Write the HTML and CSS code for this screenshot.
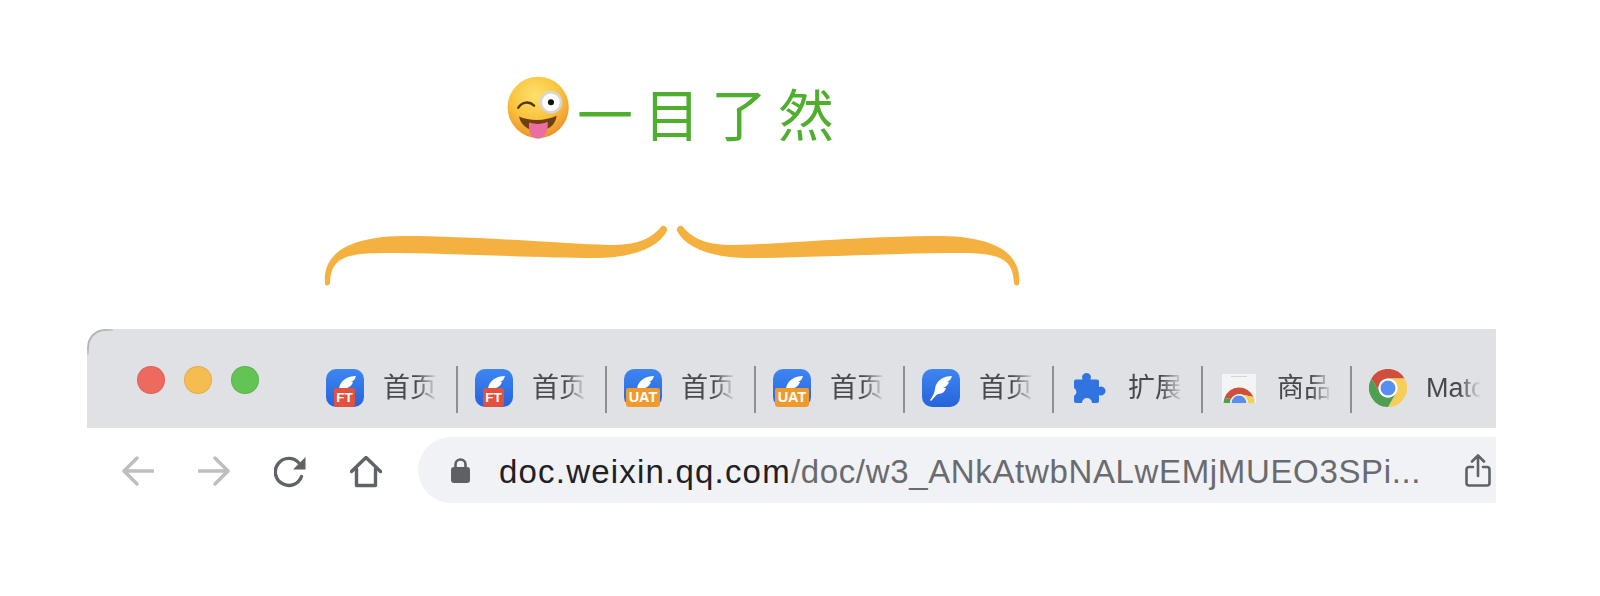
FILE: index.html
```html
<!DOCTYPE html>
<html lang="zh-CN">
<head>
    <meta charset="UTF-8">
    <meta name="viewport" content="width=device-width, initial-scale=1.0">
    <title>一目了然</title>
    <link rel="stylesheet" href="styles.css">
</head>
<body>

<svg class="defs" width="0" height="0">
    <defs>
        <linearGradient id="appBlue" x1="0" y1="0" x2="0" y2="1">
            <stop offset="0" stop-color="#3d86f2"/>
            <stop offset="1" stop-color="#2763da"/>
        </linearGradient>
        <radialGradient id="faceGold" cx="0.45" cy="0.3" r="0.75">
            <stop offset="0" stop-color="#fce26c"/>
            <stop offset="0.55" stop-color="#f9c23c"/>
            <stop offset="1" stop-color="#ea8a2a"/>
        </radialGradient>
        <symbol id="appIcon" viewBox="0 0 38 38">
            <rect width="38" height="38" rx="10" fill="url(#appBlue)"/>
            <path fill="#fff" d="M30 7C22 7 14 11 13 20C12.500 23 12 26 8 31L9 32C12 29 14 26 16 25C21 25 23 22 24 19L21 19C24 18 26 16 27 13L25 13C28 12 29 10 30 7Z"/>
        </symbol>
    </defs>
</svg>

<div class="title-row">
    <svg class="emoji" viewBox="85 52 186 190">
        <circle cx="177" cy="145" r="91" fill="url(#faceGold)"/>
        <path d="M118 146C130 128 150 126 165 140" fill="none" stroke="#5a3410" stroke-width="7" stroke-linecap="round"/>
        <circle cx="215" cy="130" r="34" fill="#d9d6d2"/>
        <circle cx="215" cy="130" r="26" fill="#fff"/>
        <circle cx="215" cy="130" r="9" fill="#111"/>
        <path d="M120 172C150 186 200 186 232 170C228 200 205 214 177 214C148 214 126 200 120 172Z" fill="#6e3f10"/>
        <path d="M150 190C168 196 190 196 205 188C207 205 204 238 177 238C152 238 148 208 150 190Z" fill="#ea6fa0"/>
    </svg>
    <h1 class="title">一目了然</h1>
</div>

<svg class="brace" viewBox="320 220 710 70">
    <g fill="#f4b13f">
        <path id="braceHalf" d="M325 284C323 262 335 237 403 236C480 236 560 244 610 245C635 245 650 240 661 227C663 224 668 227 667 231C658 248 632 258 595 258C540 258 450 253 385 253C345 253 331 258 330 283C330 286 325 286 325 284Z"/>
        <use href="#braceHalf" transform="translate(1344 0) scale(-1 1)"/>
    </g>
</svg>

<div class="window">
    <div class="bookmarks">
        <div class="lights">
            <span class="light red"></span>
            <span class="light yellow"></span>
            <span class="light green"></span>
        </div>
        <div class="tabs">
            <div class="tab">
                <span class="app-icon"><svg viewBox="0 0 38 38"><use href="#appIcon"/></svg><span class="badge ft">FT</span></span>
                <span class="label">首页</span>
            </div>
            <div class="tab">
                <span class="app-icon"><svg viewBox="0 0 38 38"><use href="#appIcon"/></svg><span class="badge ft">FT</span></span>
                <span class="label">首页</span>
            </div>
            <div class="tab">
                <span class="app-icon"><svg viewBox="0 0 38 38"><use href="#appIcon"/></svg><span class="badge uat">UAT</span></span>
                <span class="label">首页</span>
            </div>
            <div class="tab">
                <span class="app-icon"><svg viewBox="0 0 38 38"><use href="#appIcon"/></svg><span class="badge uat">UAT</span></span>
                <span class="label">首页</span>
            </div>
            <div class="tab">
                <span class="app-icon"><svg viewBox="0 0 38 38"><use href="#appIcon"/></svg></span>
                <span class="label">首页</span>
            </div>
            <div class="tab">
                <span class="app-icon">
                    <svg viewBox="0 0 38 38">
                        <path fill="#3173e0" d="M5 10.500H11.500A4.500 4.500 0 1 1 19.500 10.500H26Q28 10.500 28 12.500V18A4.500 4.500 0 1 1 28 26V32Q28 34 26 34H21A5 5 0 0 0 11 34H5Q3 34 3 32V27A4.500 4.500 0 0 0 3 19V12.500Q3 10.500 5 10.500Z"/>
                    </svg>
                </span>
                <span class="label">扩展</span>
            </div>
            <div class="tab">
                <span class="app-icon">
                    <svg viewBox="0 0 38 38">
                        <rect x="2" y="5" width="34" height="29" fill="#f4f4f5"/>
                        <rect x="11" y="7" width="16" height="1" fill="#d5d5d8"/>
                        <path fill="#cf4f3c" d="M4.500 29A15.500 15.500 0 0 1 33.500 28L19 25L11 30Z"/>
                        <path fill="#4f9f52" d="M3.500 34A15.500 15.500 0 0 1 4.500 29L11 30L12 34Z"/>
                        <path fill="#f6cf58" d="M33.500 28A15.500 15.500 0 0 1 34.500 34H26L19 25Z"/>
                        <path fill="#f4f4f5" d="M10 34A9 9 0 0 1 28 34Z"/>
                        <path fill="#5a8df0" d="M11.500 34A7.500 7.500 0 0 1 26.500 34Z"/>
                    </svg>
                </span>
                <span class="label">商品</span>
            </div>
            <div class="tab">
                <span class="app-icon">
                    <svg viewBox="0 0 38 38">
                        <path fill="#cf4f3c" d="M2.500 9.500A19 19 0 0 1 35.500 9.500L19 9.500A9.500 9.500 0 0 0 10.800 23.750Z"/>
                        <path fill="#f6cf58" d="M35.500 9.500A19 19 0 0 1 19 38L27.200 23.750A9.500 9.500 0 0 0 19 9.500Z"/>
                        <path fill="#4f9f52" d="M19 38A19 19 0 0 1 2.500 9.500L10.800 23.750A9.500 9.500 0 0 0 27.200 23.750Z"/>
                        <circle cx="19" cy="19" r="9.500" fill="#fff"/>
                        <circle cx="19" cy="19" r="7.500" fill="#5a8df0"/>
                    </svg>
                </span>
                <span class="label">Matc</span>
            </div>
        </div>
    </div>

    <div class="toolbar">
        <svg class="nav-icon muted" viewBox="0 0 32 32">
            <path d="M31 15H2M15 2L2 15L15 28"/>
        </svg>
        <svg class="nav-icon muted" viewBox="0 0 32 32">
            <path d="M1 15H30M17 2L30 15L17 28"/>
        </svg>
        <svg class="nav-icon" viewBox="0 0 32 32">
            <path d="M27.500 20.500A13.500 13.500 0 1 1 25 7"/>
            <path class="solid" d="M31.500 1V13.500H19Z"/>
        </svg>
        <svg class="nav-icon" viewBox="0 0 32 32">
            <path d="M1.500 15.500L16 1.500L30.500 15.500M6.500 13V29.500H25.500V13"/>
        </svg>
        <div class="omnibox">
            <svg class="lock" viewBox="0 0 19 25">
                <path class="lock-body" d="M3 9H16C18 9 19 10 19 12V22C19 24 18 25 16 25H3C1 25 0 24 0 22V12C0 10 1 9 3 9Z"/>
                <path class="lock-loop" d="M4.500 10V6.500A5 5 0 0 1 14.500 6.500V10"/>
            </svg>
            <div class="url"><span class="host">doc.weixin.qq.com</span>/doc/w3_ANkAtwbNALwEMjMUEO3SPi...</div>
            <svg class="share" viewBox="0 0 26 33">
                <path d="M8 13H4C2.500 13 1.500 14 1.500 15.500V29C1.500 30.500 2.500 31.500 4 31.500H22C23.500 31.500 24.500 30.500 24.500 29V15.500C24.500 14 23.500 13 22 13H18M13 22V2M7 7.500L13 1.500L19 7.500"/>
            </svg>
        </div>
    </div>
</div>

</body>
</html>
```

FILE: styles.css
```css
html, body {
    height: 596px;
    overflow: hidden;
}

body {
    margin: 0;
    background-color: #fff;
    font-family: 'Liberation Sans', 'Noto Sans CJK SC', sans-serif;
}

.defs {
    display: block;
    height: 0;
}

.title-row {
    display: flex;
    align-items: flex-start;
    height: 146px;
    padding: 76px 0 0 507px;
    box-sizing: border-box;
}

.emoji {
    width: 63px;
    height: 64px;
    flex-shrink: 0;
}

.title {
    margin: 0 0 0 7px;
    font-family: 'Noto Sans CJK SC', sans-serif;
    font-size: 56px;
    font-weight: 400;
    line-height: 72px;
    letter-spacing: 11px;
    color: #4fae2e;
}

.brace {
    display: block;
    width: 710px;
    height: 70px;
    margin: 74px 0 0 320px;
}

.window {
    width: 1409px;
    margin: 39px 0 0 87px;
    overflow: hidden;
}

/* top grey strip with the bookmarks */
.bookmarks {
    position: relative;
    display: flex;
    align-items: flex-start;
    height: 99px;
    padding: 37px 0 0 50px;
    box-sizing: border-box;
    background-color: #e0e1e5;
    border-radius: 18px 0 0 0;
    overflow: hidden;
}

/* thin dark arc on the rounded corner */
.bookmarks::before {
    content: "";
    position: absolute;
    top: 0;
    left: 0;
    width: 26px;
    height: 26px;
    box-sizing: border-box;
    border-top: 2px solid #b4b5b8;
    border-left: 2px solid #b4b5b8;
    border-radius: 18px 0 0 0;
    -webkit-mask-image: radial-gradient(circle at 0 0, #000 50%, transparent 85%);
    mask-image: radial-gradient(circle at 0 0, #000 50%, transparent 85%);
}

.lights {
    display: flex;
    gap: 19px;
    margin-right: 50px;
}

.light {
    width: 28px;
    height: 28px;
    border-radius: 50%;
    box-sizing: border-box;
    border: 1px solid rgba(0, 0, 0, 0.08);
}

.red { background-color: #ee6a5f; }
.yellow { background-color: #f5bd4f; }
.green { background-color: #61c454; }

.tabs {
    display: flex;
}

.tab {
    display: flex;
    align-items: center;
    flex-shrink: 0;
    width: 149px;
    height: 47px;
    padding: 0 0 3px 17px;
    box-sizing: border-box;
    border-right: 2px solid #8e8f93;
}

.tab:last-child {
    border-right: none;
}

.app-icon {
    position: relative;
    display: block;
    width: 38px;
    height: 38px;
    flex-shrink: 0;
    margin-right: 19px;
}

.app-icon svg {
    display: block;
    width: 38px;
    height: 38px;
}

.badge {
    position: absolute;
    bottom: 0;
    height: 19px;
    border-radius: 2px 2px 3px 3px;
    color: #fff;
    font-weight: 700;
    line-height: 19px;
    text-align: center;
}

.ft {
    left: 8px;
    width: 21px;
    background-color: #e2503f;
    font-size: 13.5px;
}

.uat {
    left: 2px;
    width: 34px;
    background-color: #f09a2e;
    font-size: 14.5px;
}

.label {
    width: 55px;
    overflow: hidden;
    white-space: nowrap;
    font-size: 27px;
    line-height: 36px;
    color: #48494c;
    -webkit-mask-image: linear-gradient(to right, #000 60%, transparent 100%);
    mask-image: linear-gradient(to right, #000 60%, transparent 100%);
}

/* address bar row */
.toolbar {
    display: flex;
    align-items: center;
    gap: 44px;
    height: 88px;
    padding: 0 0 4px 35px;
    box-sizing: border-box;
}

.nav-icon {
    width: 32px;
    height: 32px;
    flex-shrink: 0;
    margin-top: 4px;
    fill: none;
    stroke: #5f6368;
    stroke-width: 3.4;
    stroke-linecap: round;
    stroke-linejoin: round;
}

.nav-icon.muted {
    stroke: #bcbec2;
}

.nav-icon .solid {
    fill: #5f6368;
    stroke: none;
}

.omnibox {
    display: flex;
    align-items: center;
    flex: 1;
    height: 66px;
    margin-left: -8px;
    padding: 0 5px 0 33px;
    background-color: #f1f2f5;
    border-radius: 33px 0 0 33px;
}

.lock {
    width: 19px;
    height: 25px;
    flex-shrink: 0;
    margin-right: 29px;
}

.lock-body {
    fill: #5f6064;
}

.lock-loop {
    fill: none;
    stroke: #5f6064;
    stroke-width: 2.6;
}

.url {
    flex: 1;
    padding-top: 3px;
    white-space: nowrap;
    font-size: 33px;
    letter-spacing: 0.65px;
    color: #6a6b6e;
}

.host {
    letter-spacing: 1.2px;
    color: #202124;
}

.share {
    width: 26px;
    height: 33px;
    flex-shrink: 0;
    fill: none;
    stroke: #5f6368;
    stroke-width: 2.6;
    stroke-linecap: round;
    stroke-linejoin: round;
}
```
